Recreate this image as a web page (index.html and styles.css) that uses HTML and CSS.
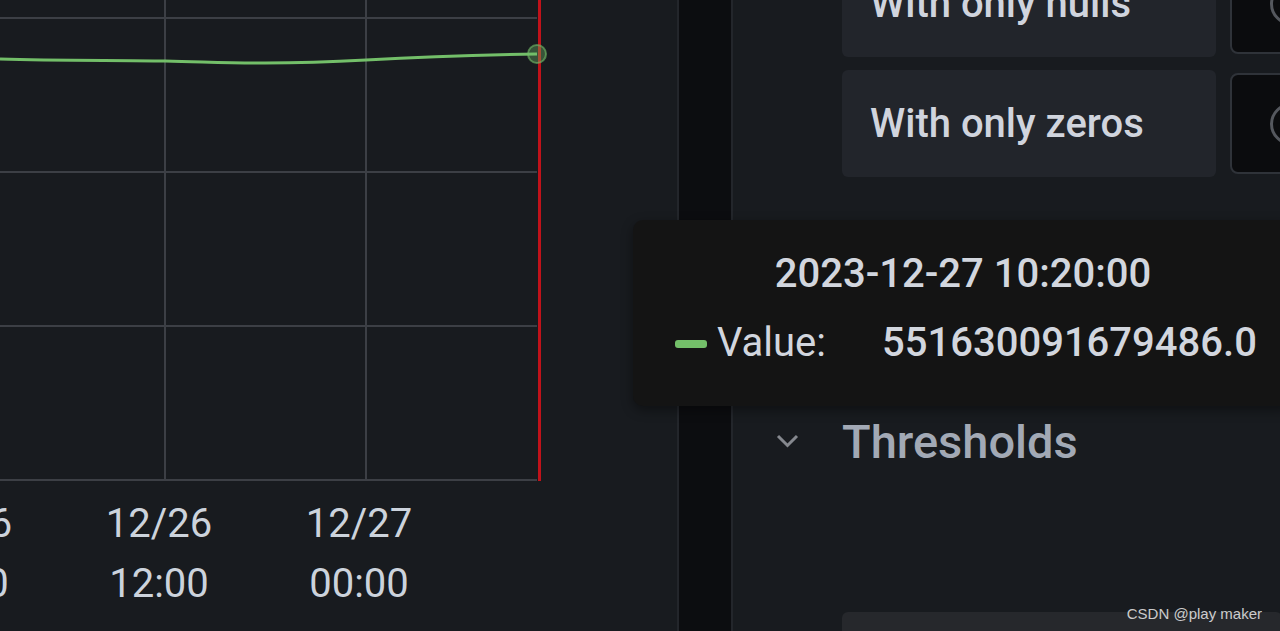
FILE: index.html
```html
<!DOCTYPE html>
<html lang="en">
  <head>
    <meta charset="UTF-8" />
    <meta name="viewport" content="width=device-width, initial-scale=1.0" />
    <title>Panel editor - Time series</title>
    <link rel="stylesheet" href="styles.css">
  </head>
  <body>
    <div class="editor">
      <div class="graph-panel">
        <svg class="chart" width="677" height="631" viewBox="0 0 677 631">
          <!-- grid -->
          <g class="grid">
            <line x1="0" y1="18" x2="537" y2="18" />
            <line x1="0" y1="172" x2="537" y2="172" />
            <line x1="0" y1="326" x2="537" y2="326" />
            <line x1="0" y1="480" x2="537" y2="480" />
            <line x1="165" y1="0" x2="165" y2="480" />
            <line x1="366" y1="0" x2="366" y2="480" />
          </g>
          <path class="series" d="M0 59 C60 61 120 60 165 61 S230 63 265 63 S330 62 366 60 S480 55 537 54" />
          <line class="cursor" x1="539.5" y1="0" x2="539.5" y2="481" />
          <circle class="point" cx="537" cy="54" r="9" />
          <!-- x axis -->
          <g class="axis">
            <text x="-41" y="537">12/26</text>
            <text x="-41" y="597">00:00</text>
            <text x="159" y="537">12/26</text>
            <text x="159" y="597">12:00</text>
            <text x="359" y="537">12/27</text>
            <text x="359" y="597">00:00</text>
          </g>
        </svg>
      </div>

      <div class="gutter"></div>

      <div class="options">
        <div class="option-list">
          <div class="option-row">
            <div class="option-label">With only nulls</div>
            <div class="switch"><span class="knob"></span></div>
          </div>
          <div class="option-row">
            <div class="option-label">With only zeros</div>
            <div class="switch"><span class="knob"></span></div>
          </div>
        </div>

        <div class="section-header">
          <svg class="chevron" width="23" height="14" viewBox="0 0 23 14">
            <path d="M2 2 L11.5 11.5 L21 2" />
          </svg>
          <span>Thresholds</span>
        </div>

        <div class="threshold-box"></div>
      </div>
    </div>

    <div class="tooltip">
      <div class="tooltip-title">2023-12-27 10:20:00</div>
      <div class="tooltip-row">
        <span class="swatch"></span>
        <span class="tooltip-label">Value:</span>
        <span class="tooltip-value">551630091679486.0</span>
      </div>
    </div>

    <div class="watermark">CSDN @play maker</div>
  </body>
</html>
```

FILE: styles.css
```css
body {
  margin: 0;
  padding: 0;
  width: 1280px;
  height: 631px;
  overflow: hidden;
  position: relative;
  background-color: #181b1f;
  font-family: Roboto, "Liberation Sans", sans-serif;
  color: #ccccdc;
}

.editor {
  display: flex;
  height: 631px;
  overflow: hidden;
}

.graph-panel {
  width: 677px;
  flex-shrink: 0;
}

.chart {
  display: block;
}

.grid line {
  stroke: #3c3f45;
  stroke-width: 2;
}

.series {
  fill: none;
  stroke: #73bf69;
  stroke-width: 3;
}

.cursor {
  stroke: #c0121a;
  stroke-width: 3;
}

.point {
  fill: rgba(115, 191, 105, 0.35);
  stroke: rgba(115, 191, 105, 0.6);
  stroke-width: 2;
}

.axis text {
  fill: #ccd3dc;
  font-family: Roboto, sans-serif;
  font-size: 40px;
  text-anchor: middle;
}

.gutter {
  width: 52px;
  flex-shrink: 0;
  background-color: #0c0d10;
  border-left: 2px solid #23262b;
  border-right: 2px solid #23262b;
}

.options {
  flex: 1;
  padding-left: 109px;
}

.option-list {
  margin-top: -50px;
  display: flex;
  flex-direction: column;
  gap: 13px;
}

.option-row {
  display: flex;
  align-items: center;
  gap: 14px;
  height: 107px;
}

.option-label {
  width: 346px;
  height: 100%;
  padding-left: 28px;
  display: flex;
  align-items: center;
  background-color: #22252b;
  border-radius: 6px;
  font-size: 40px;
  font-weight: 500;
  color: #d0d4dd;
}

.switch {
  width: 110px;
  height: 97px;
  flex-shrink: 0;
  position: relative;
  background-color: #0b0c0e;
  border: 2px solid #2f3339;
  border-radius: 8px;
}

.knob {
  position: absolute;
  left: 38px;
  top: 28px;
  width: 36px;
  height: 36px;
  border: 3px solid #55585e;
  border-radius: 50%;
}

.section-header {
  margin-top: 236px;
  margin-left: -66px;
  display: flex;
  align-items: center;
  gap: 43px;
  height: 56px;
  font-size: 47px;
  font-weight: 500;
  color: #a2a9b5;
}

.chevron path {
  fill: none;
  stroke: #85888e;
  stroke-width: 3;
}

.threshold-box {
  margin-top: 143px;
  width: 440px;
  height: 19px;
  background-color: #26282c;
  border-radius: 6px 6px 0 0;
}

.tooltip {
  position: absolute;
  left: 633px;
  top: 220px;
  width: 660px;
  height: 186px;
  box-sizing: border-box;
  padding-top: 30px;
  background-color: #141414;
  border-radius: 10px;
  box-shadow: 0 4px 12px rgba(0, 0, 0, 0.4);
}

.tooltip-title {
  text-align: center;
  font-size: 40px;
  line-height: 48px;
  font-weight: 500;
  color: #d2d6de;
}

.tooltip-row {
  margin-top: 21px;
  padding-left: 42px;
  display: flex;
  align-items: center;
  font-size: 40px;
  line-height: 48px;
  color: #d2d6de;
}

.swatch {
  width: 32px;
  height: 8px;
  margin-right: 10px;
  margin-top: 2px;
  background-color: #73bf69;
  border-radius: 3px;
}

.tooltip-label {
  width: 165px;
}

.tooltip-value {
  font-weight: 500;
}

.watermark {
  position: absolute;
  right: 18px;
  bottom: 9px;
  font-family: "Liberation Sans", Arial, sans-serif;
  font-size: 15px;
  color: rgba(235, 235, 235, 0.85);
}
```
